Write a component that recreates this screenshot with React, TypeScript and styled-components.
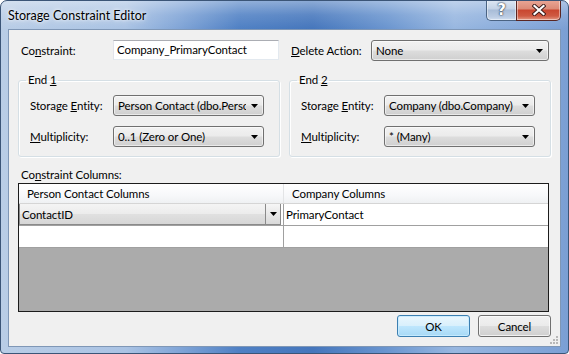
import React from 'react';
import styled, { createGlobalStyle } from 'styled-components';

const Global = createGlobalStyle`
  html, body { margin: 0; padding: 0; background: #ffffff; }
  body {
    font-family: Lato, "Noto Sans", "Open Sans", sans-serif;
    font-size: 11.5px;
    letter-spacing: -0.1px;
    color: #000;
  }
  * { box-sizing: border-box; }
`;

const Window = styled.div`
  width: 569px;
  height: 354px;
  display: flex;
  flex-direction: column;
  border: 1px solid #3b5577;
  border-radius: 7px 7px 4px 4px;
  overflow: hidden;
  background:
    linear-gradient(to bottom, rgba(255,255,255,0.38) 0px, rgba(255,255,255,0.12) 14px, rgba(255,255,255,0) 28px),
    linear-gradient(to right, #b9cde6 0%, #aac3e4 22%, #7ea3d6 32%, #4f80c4 42%, #4576bc 55%, #6a95cf 68%, #98b7e0 80%, #86a9da 92%, #7b9fd4 100%);
`;

const TitleBar = styled.div`
  height: 28px;
  display: flex;
  align-items: flex-start;
  padding: 0 7px 0 7px;
`;

const Title = styled.div`
  margin-top: 7px;
  font-size: 12.5px;
  letter-spacing: 0;
  line-height: 16px;
  color: #000;
  text-shadow: 0 0 6px rgba(255,255,255,0.9), 0 0 3px rgba(255,255,255,0.9);
`;

const CaptionButtons = styled.div`
  margin-left: auto;
  display: flex;
  margin-top: -1px;
`;

const CaptionButton = styled.div<{ $kind: 'help' | 'close' }>`
  height: 21px;
  width: ${p => (p.$kind === 'help' ? 30 : 45)}px;
  display: flex;
  align-items: center;
  justify-content: center;
  border: 1px solid ${p => (p.$kind === 'help' ? '#4a6383' : '#5a2622')};
  border-top: none;
  ${p => (p.$kind === 'help' ? 'border-right: none;' : '')}
  border-radius: ${p => (p.$kind === 'help' ? '0 0 0 5px' : '0 0 5px 0')};
  box-shadow: inset 0 0 0 1px rgba(255,255,255,0.45);
  background: ${p =>
    p.$kind === 'help'
      ? 'linear-gradient(to bottom, #dfe8f3 0%, #c3d2e6 45%, #a8bcd7 50%, #bccde4 85%, #d2dff0 100%)'
      : 'linear-gradient(to bottom, #eaa797 0%, #dc8a76 45%, #c9462f 50%, #cf5a42 80%, #e49a85 100%)'};
  color: #fff;
  font-family: "DejaVu Sans", sans-serif;
  font-weight: bold;
  font-size: 15px;
  letter-spacing: 0;
  text-shadow: 0 0 2px #1d2a3c, 0 0 1px #1d2a3c;
`;

const Client = styled.div`
  position: relative;
  flex: 1;
  margin: 0 7px 6px 7px;
  background: #f0f0f0;
  border: 1px solid #7f97b6;
  padding: 10px 9px 9px 9px;
  display: flex;
  flex-direction: column;
`;

const TwoCols = styled.div<{ $mt?: number }>`
  display: grid;
  grid-template-columns: 262px 262px;
  column-gap: 9px;
  margin-top: ${p => p.$mt ?? 0}px;
`;

const FieldRow = styled.div<{ $labelW: number; $ctlW: number; $h: number }>`
  display: grid;
  grid-template-columns: ${p => p.$labelW}px ${p => p.$ctlW}px;
  align-items: center;
  height: ${p => p.$h}px;
`;

const Label = styled.div<{ $indent?: number }>`
  padding-left: ${p => p.$indent ?? 0}px;
  white-space: nowrap;
  line-height: 15px;
`;

const TextBox = styled.div`
  height: 20px;
  border: 1px solid;
  border-color: #abadb3 #e3e9ef #e3e9ef #e2e3ea;
  background: #fff;
  padding: 0 3px;
  line-height: 18px;
  white-space: nowrap;
  overflow: hidden;
`;

const Combo = styled.div<{ $h: number }>`
  height: ${p => p.$h}px;
  display: flex;
  align-items: center;
  border: 1px solid #707070;
  border-radius: 3px;
  box-shadow: inset 0 0 0 1px rgba(255,255,255,0.55);
  background: linear-gradient(to bottom, #f2f2f2 0%, #ebebeb 48%, #dddddd 52%, #cfcfcf 100%);
  padding-left: 4px;
  overflow: hidden;
`;

const ComboText = styled.span`
  flex: 1;
  overflow: hidden;
  white-space: nowrap;
  line-height: 15px;
`;

const ArrowBox = styled.span`
  width: 17px;
  display: flex;
  justify-content: center;
  flex: none;
`;

const Arrow = () => (
  <svg width="7" height="4" viewBox="0 0 7 4">
    <path d="M0 0 H7 L3.5 4 Z" fill="#000" />
  </svg>
);

const Group = styled.fieldset`
  margin: 0;
  padding: 7px 0 9px 11px;
  border: 1px solid #d5dfe5;
  border-radius: 3px;
  box-shadow: inset 1px 1px 0 #ffffff, 1px 1px 0 #ffffff;
  min-width: 0;
`;

const Legend = styled.legend`
  padding: 0 2px;
  margin-left: -4px;
  line-height: 16px;
`;

const GroupBody = styled.div`
  display: flex;
  flex-direction: column;
  gap: 10px;
`;

const SectionLabel = styled.div`
  margin-top: 10px;
  margin-left: 3px;
  line-height: 15px;
`;

const DataGrid = styled.div`
  margin-top: 1px;
  width: 531px;
  height: 129px;
  border: 1px solid #1c1c1c;
  background: #ababab;
  display: flex;
  flex-direction: column;
`;

const GridRow = styled.div<{ $header?: boolean }>`
  display: grid;
  grid-template-columns: 265px 1fr;
  height: ${p => (p.$header ? 20 : 22)}px;
  border-bottom: 1px solid ${p => (p.$header ? '#d5d5d5' : '#a0a0a0')};
  background: ${p =>
    p.$header ? 'linear-gradient(to bottom, #ffffff 0%, #f7f8fa 60%, #eff1f3 100%)' : '#ffffff'};
`;

const GridCell = styled.div<{ $header?: boolean; $last?: boolean }>`
  display: flex;
  align-items: center;
  padding-left: ${p => (p.$header ? 8 : 2)}px;
  border-right: ${p => (p.$last ? 'none' : `1px solid ${p.$header ? '#e3e4e6' : '#a0a0a0'}`)};
  white-space: nowrap;
  overflow: hidden;
  line-height: 15px;
`;

const CellCombo = styled.div`
  flex: 1;
  display: flex;
  align-items: stretch;
  height: 22px;
  margin: -1px 2px 0 -2px;
  border: 1px solid #8a8a8a;
  background: linear-gradient(to bottom, #f4f4f4 0%, #ececec 48%, #e0e0e0 52%, #d6d6d6 100%);
`;

const CellComboText = styled.span`
  flex: 1;
  padding-left: 2px;
  display: flex;
  align-items: center;
`;

const CellComboButton = styled.span`
  width: 15px;
  border-left: 1px solid #8a8a8a;
  display: flex;
  align-items: center;
  justify-content: center;
  background: linear-gradient(to bottom, #f6f6f6 0%, #e8e8e8 50%, #d9d9d9 100%);
`;

const ButtonRow = styled.div`
  margin-top: 3px;
  display: flex;
  justify-content: flex-end;
  gap: 8px;
`;

const DlgButton = styled.div<{ $default?: boolean }>`
  width: 73px;
  height: 22px;
  display: flex;
  align-items: center;
  justify-content: center;
  border: 1px solid ${p => (p.$default ? '#3c7fb1' : '#707070')};
  border-radius: 3px;
  box-shadow: inset 0 0 0 1px ${p => (p.$default ? 'rgba(200,235,255,0.9)' : 'rgba(255,255,255,0.7)')};
  background: ${p =>
    p.$default
      ? 'linear-gradient(to bottom, #eaf6fd 0%, #d9f0fc 48%, #bee6fd 52%, #a7d9f5 100%)'
      : 'linear-gradient(to bottom, #f2f2f2 0%, #ebebeb 48%, #dddddd 52%, #cfcfcf 100%)'};
`;

const Grip = styled.svg`
  position: absolute;
  right: 1px;
  bottom: 1px;
`;

const SelectField = ({ text, h }: { text: string; h: number }) => (
  <Combo $h={h}>
    <ComboText>{text}</ComboText>
    <ArrowBox>
      <Arrow />
    </ArrowBox>
  </Combo>
);

export default function App() {
  return (
    <>
      <Global />
      <Window>
        <TitleBar>
          <Title>Storage Constraint Editor</Title>
          <CaptionButtons>
            <CaptionButton $kind="help">?</CaptionButton>
            <CaptionButton $kind="close">
              <svg width="14" height="12" viewBox="0 0 14 12">
                <path d="M2.5 2 L11.5 10 M11.5 2 L2.5 10" stroke="#3a1a18" strokeWidth="4" strokeLinecap="square" />
                <path d="M2.5 2 L11.5 10 M11.5 2 L2.5 10" stroke="#ffffff" strokeWidth="2.2" strokeLinecap="square" />
              </svg>
            </CaptionButton>
          </CaptionButtons>
        </TitleBar>
        <Client>
          <TwoCols>
            <FieldRow $labelW={95} $ctlW={166} $h={20}>
              <Label $indent={3}>
                Co<u>n</u>straint:
              </Label>
              <TextBox>Company_PrimaryContact</TextBox>
            </FieldRow>
            <FieldRow $labelW={82} $ctlW={178} $h={20}>
              <Label $indent={2}>
                <u>D</u>elete Action:
              </Label>
              <SelectField text="None" h={21} />
            </FieldRow>
          </TwoCols>

          <TwoCols $mt={12}>
            <Group>
              <Legend>
                End <u>1</u>
              </Legend>
              <GroupBody>
                <FieldRow $labelW={83} $ctlW={151} $h={21}>
                  <Label>
                    Storage <u>E</u>ntity:
                  </Label>
                  <SelectField text="Person Contact (dbo.Person)" h={21} />
                </FieldRow>
                <FieldRow $labelW={83} $ctlW={151} $h={21}>
                  <Label>
                    <u>M</u>ultiplicity:
                  </Label>
                  <SelectField text="0..1 (Zero or One)" h={21} />
                </FieldRow>
              </GroupBody>
            </Group>
            <Group>
              <Legend>
                End <u>2</u>
              </Legend>
              <GroupBody>
                <FieldRow $labelW={83} $ctlW={151} $h={21}>
                  <Label>
                    Storage <u>E</u>ntity:
                  </Label>
                  <SelectField text="Company (dbo.Company)" h={21} />
                </FieldRow>
                <FieldRow $labelW={83} $ctlW={151} $h={21}>
                  <Label>
                    <u>M</u>ultiplicity:
                  </Label>
                  <SelectField text="* (Many)" h={21} />
                </FieldRow>
              </GroupBody>
            </Group>
          </TwoCols>

          <SectionLabel>
            Co<u>n</u>straint Columns:
          </SectionLabel>
          <DataGrid>
            <GridRow $header>
              <GridCell $header>Person Contact Columns</GridCell>
              <GridCell $header $last>
                Company Columns
              </GridCell>
            </GridRow>
            <GridRow>
              <GridCell>
                <CellCombo>
                  <CellComboText>ContactID</CellComboText>
                  <CellComboButton>
                    <Arrow />
                  </CellComboButton>
                </CellCombo>
              </GridCell>
              <GridCell $last>PrimaryContact</GridCell>
            </GridRow>
            <GridRow>
              <GridCell />
              <GridCell $last />
            </GridRow>
          </DataGrid>

          <ButtonRow>
            <DlgButton $default>OK</DlgButton>
            <DlgButton>Cancel</DlgButton>
          </ButtonRow>
          <Grip width="10" height="10" viewBox="0 0 10 10">
            {[
              [8, 2],
              [8, 5],
              [5, 5],
              [8, 8],
              [5, 8],
              [2, 8],
            ].map(([x, y], i) => (
              <rect key={i} x={x - 1} y={y - 1} width="2" height="2" fill="#b8b8b8" />
            ))}
          </Grip>
        </Client>
      </Window>
    </>
  );
}
